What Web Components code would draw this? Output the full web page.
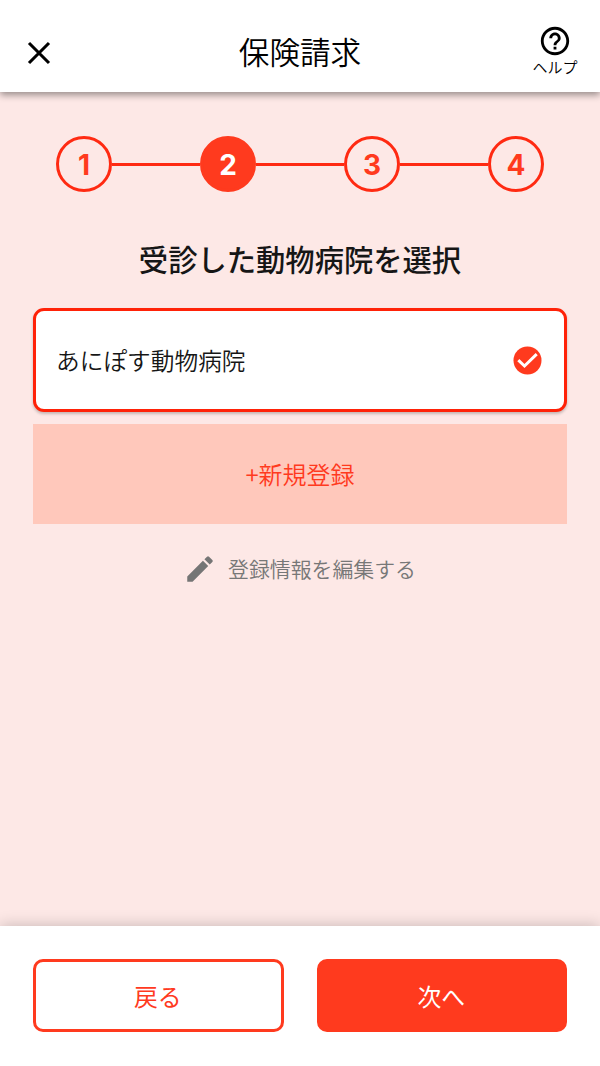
<!DOCTYPE html>
<html lang="ja">
<head>
<meta charset="utf-8">
<title>保険請求</title>
<style>
html,body{margin:0;height:100%}
body{font-family:"Noto Sans CJK JP",sans-serif;background:#fde8e6;color:#161616;overflow:hidden}
</style>
</head>
<body>
<claim-page></claim-page>
<script>
const define = (name, html) => {
  const t = document.createElement('template');
  t.innerHTML = html;
  customElements.define(name, class extends HTMLElement {
    constructor() {
      super();
      this.attachShadow({ mode: 'open' }).append(t.content.cloneNode(true));
    }
  });
};

define('app-header', `
<style>
:host{display:grid;grid-template-columns:90px 1fr 90px;align-items:center;height:92px;box-sizing:border-box;background:#fff;color:#000;box-shadow:0 3px 7px rgba(0,0,0,.4);flex:none;z-index:1}
h1{margin:0;font-size:30.6px;line-height:46px;font-weight:350;text-align:center;padding-top:10px}
.close{padding:13px 0 0 27px;display:flex}
.help{display:flex;flex-direction:column;align-items:center;padding-top:11px;font-size:15px;line-height:18px;padding-bottom:4px;font-weight:350}
svg{display:block}
</style>
<div class="close"><svg width="24" height="24" viewBox="0 0 24 24"><path d="M2 2 22 22M22 2 2 22" stroke="#000" stroke-width="3.1" fill="none"/></svg></div>
<h1><slot></slot></h1>
<div class="help">
<svg width="34" height="34" viewBox="0 0 24 24"><path d="M11 18h2v-2h-2v2zm1-16C6.480 2 2 6.480 2 12s4.480 10 10 10 10-4.480 10-10S17.520 2 12 2zm0 18c-4.410 0-8-3.590-8-8s3.590-8 8-8 8 3.590 8 8-3.590 8-8 8zm0-14c-2.210 0-4 1.790-4 4h2c0-1.100.9-2 2-2s2 .9 2 2c0 2-3 1.750-3 5h2c0-2.250 3-2.500 3-5 0-2.210-1.790-4-4-4z"/></svg>
<slot name="help"></slot></div>`);

define('step-dot', `
<style>
:host{display:flex;align-items:center;justify-content:center;box-sizing:border-box;width:56px;height:56px;padding-top:1px;border:3px solid #ff2a12;border-radius:50%;color:#ff3a1e;font:700 28px/1 Inter,sans-serif;flex:none}
:host([current]){background:#ff3a1e;color:#fff;border-color:#ff3a1e}
</style><slot></slot>`);

define('step-bar', `
<style>
:host{display:flex;align-items:center;margin:0 56px}
i{flex:1;height:3px;background:#ff2a12}
</style>
<step-dot>1</step-dot><i></i><step-dot current>2</step-dot><i></i><step-dot>3</step-dot><i></i><step-dot>4</step-dot>`);

define('hospital-card', `
<style>
:host{display:flex;align-items:center;justify-content:space-between;box-sizing:border-box;height:104px;padding:0 22px 0 20px;border:3px solid #ff2208;border-radius:11px;background:#fff;font-size:23.7px;line-height:36px;font-weight:350;box-shadow:0 2px 3px rgba(0,0,0,.22)}
svg{display:block}
</style>
<slot></slot>
<svg width="29" height="29" viewBox="0 0 29 29"><circle cx="14.500" cy="14.500" r="14" fill="#ff3a1e"/><path d="M5.300 14.200 11.500 20 23.700 8.200" fill="none" stroke="#fff" stroke-width="3"/></svg>`);

define('add-button', `
<style>
:host{display:flex;align-items:center;justify-content:center;height:100px;background:#ffc8bb;color:#ff3a1e;font-size:24px;line-height:36px;font-weight:350}
</style><span><slot></slot></span>`);

define('edit-link', `
<style>
:host{display:flex;align-items:center;justify-content:center;gap:11px;color:#777;font-size:20.9px;line-height:32px;font-weight:350;padding-right:1px}
svg{display:block}
span{margin-top:-2px}
</style>
<svg width="34" height="34" viewBox="0 0 24 24" fill="#757575"><path d="M3 17.250V21h3.750L17.810 9.940l-3.750-3.750L3 17.250zM20.710 7.040a.996.996 0 0 0 0-1.410l-2.340-2.340a.996.996 0 0 0-1.410 0l-1.830 1.830 3.750 3.750 1.830-1.830z"/></svg>
<span><slot></slot></span>`);

define('action-button', `
<style>
:host{display:flex;align-items:center;justify-content:center;box-sizing:border-box;flex:1;height:73px;border:3px solid #ff3a1e;border-radius:10px;background:#fff;color:#ff3a1e;font-size:23.8px;line-height:36px;font-weight:400;padding-right:1px}
:host([primary]){background:#ff3a1e;color:#fff}
</style><span><slot></slot></span>`);

define('action-footer', `
<style>
:host{display:flex;gap:33px;align-items:flex-start;box-sizing:border-box;height:140px;padding:33px 33px 0;background:#fff;box-shadow:0 -1px 14px rgba(0,0,0,.2);flex:none}
</style><slot></slot>`);

define('claim-page', `
<style>
:host{display:flex;flex-direction:column;height:1066px;background:#fde8e6}
main{flex:1;display:flex;flex-direction:column;padding-top:44px}
h2{margin:44px 0 27px;font-size:29.3px;line-height:45px;font-weight:500;text-align:center}
.list{display:grid;gap:12px;margin:0 33px}
edit-link{margin-top:28px}
</style>
<app-header>保険請求<span slot="help">ヘルプ</span></app-header>
<main>
<step-bar></step-bar>
<h2>受診した動物病院を選択</h2>
<div class="list">
<hospital-card>あにぽす動物病院</hospital-card>
<add-button>+新規登録</add-button>
</div>
<edit-link>登録情報を編集する</edit-link>
</main>
<action-footer><action-button>戻る</action-button><action-button primary>次へ</action-button></action-footer>`);
</script>
</body>
</html>
